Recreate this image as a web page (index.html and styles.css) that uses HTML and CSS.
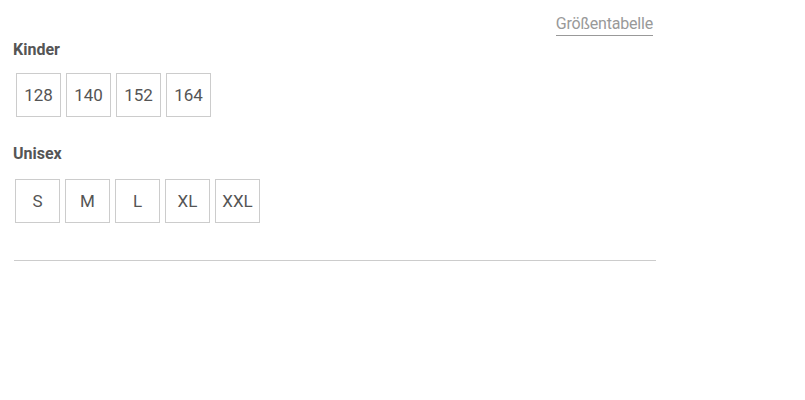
FILE: index.html
```html
<!DOCTYPE html>
<html lang="de">
<head>
<meta charset="utf-8">
<link rel="stylesheet" href="styles.css">
</head>
<body>
<div class="wrap">
  <div class="top"><a class="chart" href="#">Größentabelle</a></div>
  <div class="group">
    <div class="label">Kinder</div>
    <div class="sizes kids">
      <span class="size">128</span><span class="size">140</span><span class="size">152</span><span class="size">164</span>
    </div>
  </div>
  <div class="group">
    <div class="label">Unisex</div>
    <div class="sizes">
      <span class="size">S</span><span class="size">M</span><span class="size">L</span><span class="size">XL</span><span class="size">XXL</span>
    </div>
  </div>
  <div class="rule"></div>
</div>
</body>
</html>
```
FILE: styles.css
```css
html, body { margin: 0; padding: 0; background: #fff; }
body { font-family: "Roboto", "Liberation Sans", sans-serif; color: #555; }
.wrap { width: 643px; margin-left: 13px; padding-top: 14px; }
.top { display: flex; justify-content: flex-end; padding-right: 3px; height: 26px; }
.chart { color: #999; font-size: 16px; text-decoration: none; border-bottom: 1px solid #999; line-height: 20px; height: 21px; letter-spacing: -0.2px; }
.label { font-weight: bold; font-size: 16px; line-height: 20px; color: #555; }
.sizes { display: flex; gap: 5px; padding-left: 2px; margin-top: 15px; }
.kids { padding-left: 3px; margin-top: 13px; margin-bottom: 27px; }
.size { box-sizing: border-box; width: 45px; height: 44px; border: 1px solid #ccc; display: flex; align-items: center; justify-content: center; font-size: 17px; color: #555; }
.rule { margin-top: 37px; margin-left: 1px; height: 1px; background: #ccc; }
```
